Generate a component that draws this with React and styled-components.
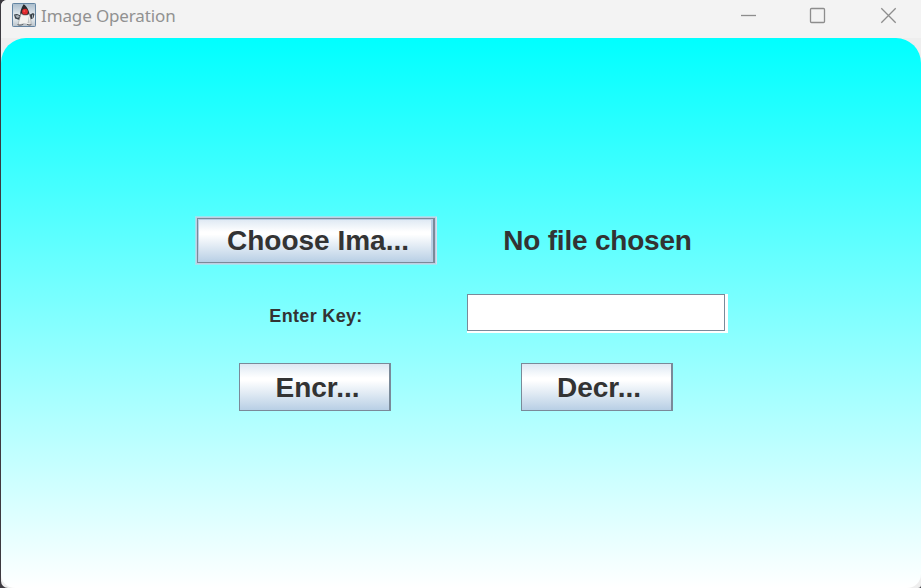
import React from "react";
import styled, { createGlobalStyle } from "styled-components";

const GlobalStyle = createGlobalStyle`
  * { box-sizing: border-box; }
  html, body { margin: 0; padding: 0; overflow: hidden; }
`;

const Desktop = styled.div`
  width: 921px;
  height: 588px;
  padding-left: 1px;
  background: #3d3a40;
  overflow: hidden;
`;

const Window = styled.div`
  display: flex;
  flex-direction: column;
  width: 920px;
  height: 588px;
  background: #eeeeee;
  border-radius: 6px 0 3px 7px;
  overflow: hidden;
`;

const TitleBar = styled.header`
  display: flex;
  flex: 0 0 38px;
  align-items: flex-start;
  padding: 3px 24px 0 11px;
  background: #f3f3f3;
`;

const Title = styled.span`
  flex: 1;
  margin-left: 5px;
  font: 17px/26px "Noto Sans", sans-serif;
  letter-spacing: -0.13px;
  color: #919191;
  white-space: nowrap;
`;

const WindowControls = styled.div`
  display: flex;
  gap: 54px;
  padding-top: 4px;
`;

const ControlIcon = styled.svg`
  display: block;
  width: 17px;
  height: 17px;
  overflow: visible;
  fill: none;
  stroke: #8d8d8d;
  stroke-width: 1.3;
`;

const DukeIcon = styled.svg`
  display: block;
  width: 24px;
  height: 24px;
`;

const Panel = styled.main`
  flex: 1;
  padding: 178px 0 0 194px;
  border-radius: 25px 25px 14px 14px;
  background: linear-gradient(#00ffff, #ffffff);
`;

const Form = styled.div`
  display: grid;
  grid-template-columns: 242px 261px;
  grid-template-rows: 48px 39px 48px;
  gap: 30px;
  align-items: center;
  justify-items: center;
`;

const Label = styled.label`
  padding-top: ${(p) => p.$drop}px;
  font: bold ${(p) => p.$size}px/1.15 "Liberation Sans", Arial, sans-serif;
  letter-spacing: ${(p) => p.$tracking};
  color: #333333;
  white-space: nowrap;
`;

const MetalButton = styled.button`
  width: ${(p) => p.$width}px;
  height: ${(p) => p.$height}px;
  margin-right: ${(p) => (p.$focused ? 0 : 2)}px;
  padding: 1px 0 0 ${(p) => (p.$focused ? 5 : 6)}px;
  border: 1px solid #7a8a99;
  border-right-width: 2px;
  border-radius: 0;
  font: bold 28px/32px "Liberation Sans", Arial, sans-serif;
  color: #333333;
  white-space: nowrap;
  background: linear-gradient(#dde8f3 0%, #ffffff 30%, #ffffff 36%, #b8cfe5 100%);
  box-shadow: ${(p) =>
    p.$focused
      ? "inset 1px 1px #b8cfe5, inset -2px -1px #b8cfe5, 0 0 0 1px #c0cde2, 1px 0 0 1px #d3e0ee, 0 0 0 2px rgba(200, 215, 232, 0.6)"
      : "none"};
`;

const KeyField = styled.input`
  display: block;
  width: 258px;
  height: 37px;
  margin: 0 3px 2px 0;
  padding: 0 4px;
  border: 1px solid #7a8a99;
  border-radius: 0;
  outline: none;
  background: #ffffff;
  box-shadow: 3px 2px 0 #ffffff, 3px 0 0 #ffffff, 0 2px 0 #ffffff;
  font: bold 28px/32px "Liberation Sans", Arial, sans-serif;
`;

function Duke() {
  return (
    <DukeIcon viewBox="0 0 24 24" aria-hidden="true">
      <defs>
        <linearGradient id="tile" x1="0" y1="0" x2="0" y2="1">
          <stop offset="0" stopColor="#a9bccb" />
          <stop offset="0.6" stopColor="#edf2f5" />
          <stop offset="1" stopColor="#b9c3ca" />
        </linearGradient>
      </defs>
      <rect x="0.5" y="0.5" width="23" height="23" rx="0.8" fill="url(#tile)" stroke="#6485a2" />
      <path d="M2 11.5 5 11l5 2-1 4.5-6-2zM17 12l4-2 1.5 1-1 4-3 1.5z" fill="#394249" />
      <path d="M3 12.5 6 12l2 2-3 1zM20 12l1-.5v3l-1 .5z" fill="#a7b0b8" />
      <path d="M11.6 1.2C9 5 7.8 9.5 8.4 12h9.2c-.2-4-2.6-8.8-6-10.8z" fill="#292b2e" />
      <path d="M9 10.5c-.4 3.2-2.8 8-2.6 11.3 1.8.4 2.7-.8 5.6-1 2.8-.1 4.4 1.5 6.8.8.6-3.7-.6-8-1.7-10.9-2 2.2-5.9 2.2-8.1-.2z" fill="#f2f2f0" stroke="#8a8e90" strokeWidth="0.5" />
      <path d="M16.2 13c1 2.7 1.5 5.3 1.4 7.5l-2.2-.7c1-2 1-4.2.8-6.8z" fill="#c2c5c6" />
      <path d="M5.5 21.5c1.3.8 3.8 1 5.8-.2M15 21.3c1.5.9 3 .9 4.4.2" fill="none" stroke="#45494d" strokeWidth="0.8" />
      <circle cx="13" cy="8.7" r="2.9" fill="#df292d" />
      <circle cx="12.3" cy="8" r="1" fill="#f6514c" />
    </DukeIcon>
  );
}

export default function App() {
  return (
    <>
      <GlobalStyle />
      <Desktop>
        <Window>
          <TitleBar>
            <Duke />
            <Title>Image Operation</Title>
            <WindowControls>
              <ControlIcon viewBox="0 0 17 17">
                <path d="M3 8.5h15" />
              </ControlIcon>
              <ControlIcon viewBox="0 0 17 17">
                <rect x="1.5" y="1.5" width="14" height="14" rx="1" />
              </ControlIcon>
              <ControlIcon viewBox="0 0 17 17">
                <path d="M1.3 1.3l14.4 14.4M15.7 1.3 1.3 15.7" />
              </ControlIcon>
            </WindowControls>
          </TitleBar>
          <Panel>
            <Form>
              <MetalButton $width={238} $height={45} $focused>
                Choose Ima...
              </MetalButton>
              <Label as="span" $size={28} $tracking="-0.2px" $drop={2}>
                No file chosen
              </Label>
              <Label htmlFor="key" $size={18} $tracking="0.33px" $drop={5}>
                Enter Key:
              </Label>
              <KeyField id="key" />
              <MetalButton $width={152} $height={48}>Encr...</MetalButton>
              <MetalButton $width={152} $height={48}>Decr...</MetalButton>
            </Form>
          </Panel>
        </Window>
      </Desktop>
    </>
  );
}
